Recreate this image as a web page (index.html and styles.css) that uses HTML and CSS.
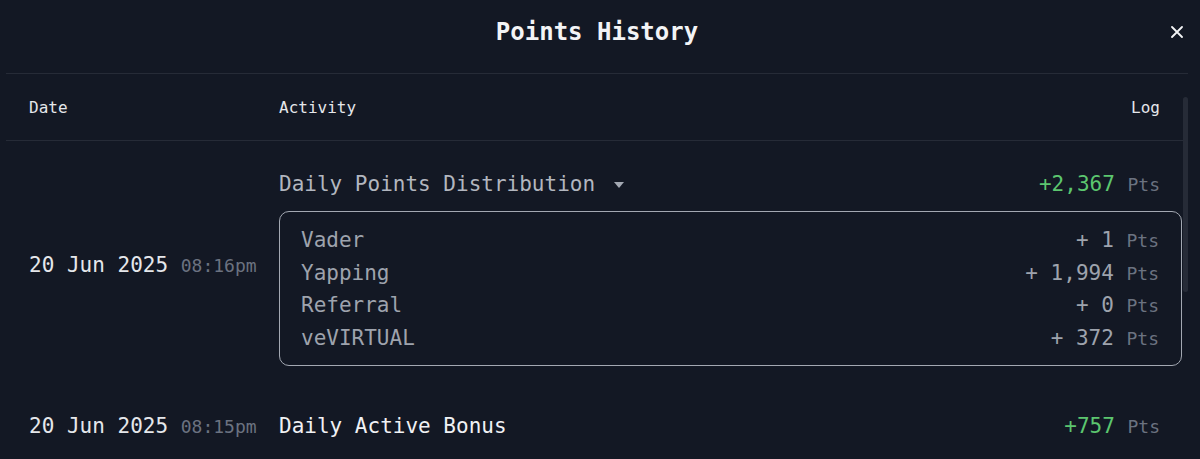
FILE: index.html
```html
<!DOCTYPE html>
<html>
<head>
<meta charset="utf-8">
<link rel="stylesheet" href="styles.css">
</head>
<body>
<div class="modal">
  <div class="header">
    <span></span>
    <h1 class="title">Points History</h1>
    <button class="close" aria-label="Close">
      <svg width="12" height="12" viewBox="0 0 12 12"><path d="M1 1L11 11M11 1L1 11" stroke="#f3f4f6" stroke-width="1.8" stroke-linecap="round"/></svg>
    </button>
  </div>
  <div class="scroll">
    <div class="content">
      <div class="thead">
        <div class="th">Date</div>
        <div class="th th-act">Activity</div>
        <div class="th th-log">Log</div>
      </div>
      <div class="row">
        <div class="date">20 Jun 2025 <span class="time">08:16pm</span></div>
        <div class="act">
          <div class="act-head">
            <span class="act-title muted">Daily Points Distribution <svg class="caret" width="10" height="6" viewBox="0 0 10 6"><path d="M0 0H10L5 6Z" fill="#a3a8b2"/></svg></span>
            <span class="log"><span class="green">+2,367</span> <span class="pts">Pts</span></span>
          </div>
          <div class="box">
            <div class="item"><span>Vader</span><span class="amt">+ 1 <span class="pts">Pts</span></span></div>
            <div class="item"><span>Yapping</span><span class="amt">+ 1,994 <span class="pts">Pts</span></span></div>
            <div class="item"><span>Referral</span><span class="amt">+ 0 <span class="pts">Pts</span></span></div>
            <div class="item"><span>veVIRTUAL</span><span class="amt">+ 372 <span class="pts">Pts</span></span></div>
          </div>
        </div>
      </div>
      <div class="row">
        <div class="date">20 Jun 2025 <span class="time">08:15pm</span></div>
        <div class="act">
          <div class="act-head single">
            <span class="act-title">Daily Active Bonus</span>
            <span class="log"><span class="green">+757</span> <span class="pts">Pts</span></span>
          </div>
        </div>
      </div>
    </div>
    <div class="scrollbar"><div class="thumb"></div></div>
  </div>
</div>
</body>
</html>
```

FILE: styles.css
```css
* { box-sizing: border-box; }
html, body {
  margin: 0;
  padding: 0;
  background: #131824;
  height: 459px;
  overflow: hidden;
}
body {
  font-family: "DejaVu Sans Mono", "Liberation Mono", monospace;
  color: #e8eaee;
}
.modal {
  width: 1200px;
  height: 459px;
  display: flex;
  flex-direction: column;
}
.header {
  flex-shrink: 0;
  margin: 0 12px 0 6px;
  height: 74px;
  border-bottom: 1px solid #262b37;
  display: grid;
  grid-template-columns: 1fr auto 1fr;
  align-items: center;
}
.title {
  margin: 0;
  font-size: 24px;
  font-weight: bold;
  color: #f3f4f6;
  padding-bottom: 10px;
}
.close {
  justify-self: end;
  background: none;
  border: 0;
  padding: 0;
  margin-right: 5px;
  width: 12px;
  height: 12px;
  margin-bottom: 10px;
  display: flex;
}
.scroll {
  flex: 1;
  min-height: 0;
  display: flex;
  margin-left: 6px;
  margin-right: 12px;
  overflow: hidden;
}
.content {
  flex: 1;
}
.scrollbar {
  width: 5px;
  padding-top: 23px;
}
.thumb {
  width: 5px;
  height: 195px;
  background: #262b37;
  border-radius: 3px;
}
.thead {
  display: flex;
  align-items: center;
  height: 67px;
  border-bottom: 1px solid #262b37;
  padding: 0 23px;
  font-size: 16px;
  color: #e5e7eb;
}
.th { width: 250px; }
.th-act { flex: 1; }
.th-log { width: auto; text-align: right; }
.row {
  display: flex;
  align-items: center;
  padding: 22px 1px 22px 23px;
}
.date {
  width: 250px;
  font-size: 21px;
  color: #e5e7eb;
  white-space: nowrap;
}
.time {
  font-size: 18px;
  color: #6b7280;
}
.act { flex: 1; }
.act-head {
  display: flex;
  justify-content: space-between;
  align-items: center;
  margin-top: 5px;
  padding-right: 22px;
  height: 32px;
  font-size: 21px;
}
.act-head.single { margin-top: 0; }
.act-title { color: #f0f1f4; white-space: nowrap; }
.act-title.muted { color: #b2b6bf; }
.caret { margin-left: 6px; vertical-align: middle; }
.log { white-space: nowrap; }
.green { color: #5cc66f; }
.pts { font-size: 18px; color: #6b7280; }
.box {
  margin-top: 11px;
  border: 1px solid #a3a8b2;
  border-radius: 10px;
  padding: 12px 22px 11px 21px;
  font-size: 21px;
  color: #9ea3ad;
}
.item {
  display: flex;
  justify-content: space-between;
  align-items: center;
  height: 32.5px;
}
.amt { color: #9ea3ad; white-space: nowrap; }
```
